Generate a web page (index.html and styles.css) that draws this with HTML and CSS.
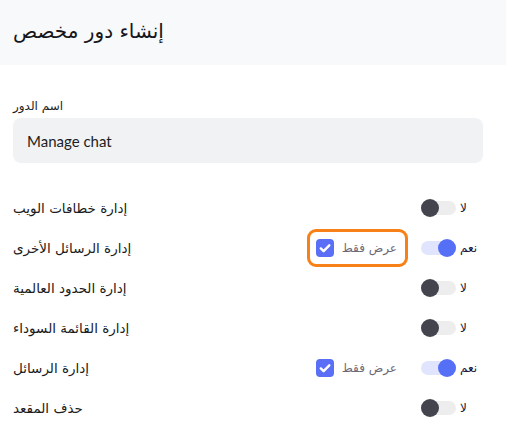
FILE: index.html
```html
<!DOCTYPE html>
<html lang="ar">
<head>
<meta charset="utf-8">
<link rel="stylesheet" href="styles.css">
</head>
<body>
<header class="head"><h1 class="title" dir="rtl">إنشاء دور مخصص</h1></header>
<main class="content">
  <label class="field-label" dir="rtl">اسم الدور</label>
  <div class="input">Manage chat</div>
  <div class="rows">
    <div class="row">
      <span class="name" dir="rtl">إدارة خطافات الويب</span>
      <div class="ctrls">
        <span class="toggle"><span class="knob"></span></span>
        <span class="yn" dir="rtl">لا</span>
      </div>
    </div>
    <div class="row">
      <span class="name" dir="rtl">إدارة الرسائل الأخرى</span>
      <div class="ctrls">
        <span class="view hl"><span class="cb"><svg viewBox="0 0 18 18" width="18" height="18"><path d="M4.8 9.4l2.8 2.7L13.3 6.3" fill="none" stroke="#fff" stroke-width="2.4" stroke-linecap="round" stroke-linejoin="round"/></svg></span><span class="vt" dir="rtl">عرض فقط</span></span>
        <span class="toggle on"><span class="knob"></span></span>
        <span class="yn" dir="rtl">نعم</span>
      </div>
    </div>
    <div class="row">
      <span class="name" dir="rtl">إدارة الحدود العالمية</span>
      <div class="ctrls">
        <span class="toggle"><span class="knob"></span></span>
        <span class="yn" dir="rtl">لا</span>
      </div>
    </div>
    <div class="row">
      <span class="name" dir="rtl">إدارة القائمة السوداء</span>
      <div class="ctrls">
        <span class="toggle"><span class="knob"></span></span>
        <span class="yn" dir="rtl">لا</span>
      </div>
    </div>
    <div class="row">
      <span class="name" dir="rtl">إدارة الرسائل</span>
      <div class="ctrls">
        <span class="view"><span class="cb"><svg viewBox="0 0 18 18" width="18" height="18"><path d="M4.8 9.4l2.8 2.7L13.3 6.3" fill="none" stroke="#fff" stroke-width="2.4" stroke-linecap="round" stroke-linejoin="round"/></svg></span><span class="vt" dir="rtl">عرض فقط</span></span>
        <span class="toggle on"><span class="knob"></span></span>
        <span class="yn" dir="rtl">نعم</span>
      </div>
    </div>
    <div class="row">
      <span class="name" dir="rtl">حذف المقعد</span>
      <div class="ctrls">
        <span class="toggle"><span class="knob"></span></span>
        <span class="yn" dir="rtl">لا</span>
      </div>
    </div>
  </div>
</main>
</body>
</html>
```
FILE: styles.css
```css
* { box-sizing: border-box; }
html, body { margin: 0; padding: 0; background: #fff; }
body {
  font-family: "DejaVu Sans", "Noto Sans", sans-serif;
  color: #1d1d22;
  width: 506px;
  height: 432px;
  overflow: hidden;
}
.head {
  background: #f8f9fa;
  height: 65px;
  display: flex;
  align-items: center;
  padding: 0 13px 4px;
}
.title {
  margin: 0;
  font-size: 20px;
  font-weight: 500;
  color: #16161a;
}
.content {
  padding: 33px 23px 0 13px;
  display: flex;
  flex-direction: column;
}
.field-label {
  font-size: 12px;
  line-height: 16px;
  color: #1d1d22;
  align-self: flex-start;
  margin-bottom: 4px;
}
.input {
  height: 45px;
  background: #f1f2f4;
  border-radius: 8px;
  display: flex;
  align-items: center;
  padding: 0 14px;
  font-family: Lato, "Liberation Sans", sans-serif;
  font-size: 15px;
  color: #1d1d22;
}
.rows {
  margin-top: 25px;
  display: flex;
  flex-direction: column;
}
.row {
  height: 40px;
  display: flex;
  align-items: center;
  justify-content: space-between;
}
.name {
  font-size: 13.5px;
  color: #1b1b20;
}
.ctrls {
  display: flex;
  align-items: center;
}
.toggle {
  position: relative;
  width: 35px;
  height: 14px;
  border-radius: 7px;
  background: #ededee;
  margin-right: 4px;
}
.knob {
  position: absolute;
  top: -2px;
  left: 0;
  width: 18px;
  height: 18px;
  border-radius: 50%;
  background: #44444f;
}
.toggle.on { background: #e0e5fd; }
.toggle.on .knob { left: 17px; background: #5570f6; }
.yn {
  width: 23px;
  font-size: 12px;
  color: #15153a;
  text-align: left;
  display: inline-block;
}
.view {
  display: flex;
  align-items: center;
  height: 38px;
  padding: 0 8px 0 6px;
  margin-right: 13px;
  border: 3px solid transparent;
  border-radius: 9px;
}
.view.hl { border-color: #f78019; }
.cb {
  width: 18px;
  height: 18px;
  border-radius: 4px;
  background: #5a6ff6;
  display: flex;
  margin-right: 8px;
}
.vt {
  font-size: 12px;
  color: #6a6a78;
}
```
